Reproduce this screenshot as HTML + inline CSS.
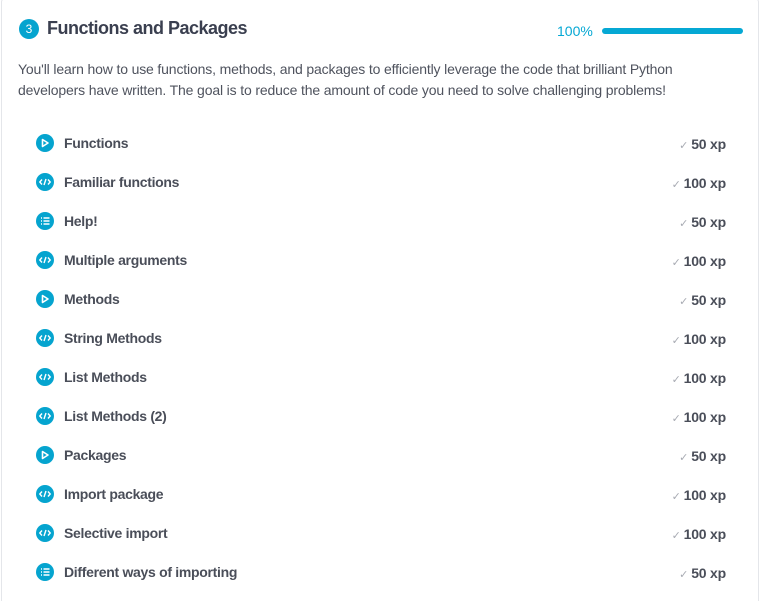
<!DOCTYPE html>
<html style="height:603px;overflow:hidden"><head><style>
body{margin:0;width:762px;height:603px;background:#fff;font-family:"Liberation Sans",sans-serif;overflow:hidden;position:relative}
.card{position:absolute;left:1px;top:-2px;width:758px;height:603px;border:1px solid #e4e6ea;border-bottom:none;border-radius:4px 4px 0 0;box-sizing:border-box}
.num{position:absolute;left:19px;top:19px;width:20px;height:20px;border-radius:50%;background:#05a4cf;color:#fff;font-size:12px;text-align:center;line-height:20px}
.title{position:absolute;left:47px;top:18px;font-size:18px;font-weight:bold;color:#3a3f4f;letter-spacing:-0.5px}
.pct{position:absolute;left:557px;top:23px;font-size:14px;color:#05a8d4}
.bar{position:absolute;left:602px;top:28px;width:141px;height:6px;border-radius:3px;background:#05a8d4}
.desc{position:absolute;left:18px;top:59px;font-size:14px;line-height:21px;color:#4f535e;width:690px;letter-spacing:-0.15px}
.row{position:absolute;left:36px;width:690px;height:20px}
.ic{position:absolute;left:0;top:0;width:18px;height:18px;border-radius:50%;background:#05a4cf}
.ic svg{position:absolute;left:0;top:0}
.nm{position:absolute;left:28px;top:1px;font-size:14px;font-weight:bold;color:#4a4e59;letter-spacing:-0.3px}
.xp{position:absolute;right:0;top:2px;font-size:14px;font-weight:bold;color:#4a4e59;letter-spacing:-0.2px}
.xp span{color:#a8abb3;font-weight:normal;font-size:11px;margin-right:3px}
</style></head><body>
<div class="card"></div>
<div class="num">3</div>
<div class="title">Functions and Packages</div>
<div class="pct">100%</div>
<div class="bar"></div>
<div class="desc">You'll learn how to use functions, methods, and packages to efficiently leverage the code that brilliant Python<br>developers have written. The goal is to reduce the amount of code you need to solve challenging problems!</div>
<div id="rows"></div>
<script>
var play='<svg width="18" height="18"><path d="M6.5 5.5 L12 9 L6.5 12.5 Z" fill="none" stroke="#fff" stroke-width="1.6" stroke-linejoin="round"/></svg>';
var code='<svg width="18" height="18"><path d="M6 6.5 L3.8 9 L6 11.5 M12 6.5 L14.2 9 L12 11.5 M10 6 L8 12" fill="none" stroke="#fff" stroke-width="1.4"/></svg>';
var list='<svg width="18" height="18"><path d="M5 6h1M5 9h1M5 12h1M7.5 6h6M7.5 9h6M7.5 12h6" stroke="#fff" stroke-width="1.4"/></svg>';
var d=[[play,"Functions",50],[code,"Familiar functions",100],[list,"Help!",50],[code,"Multiple arguments",100],[play,"Methods",50],[code,"String Methods",100],[code,"List Methods",100],[code,"List Methods (2)",100],[play,"Packages",50],[code,"Import package",100],[code,"Selective import",100],[list,"Different ways of importing",50]];
var h='';
d.forEach(function(r,i){var y=134+i*39;h+='<div class="row" style="top:'+y+'px"><div class="ic">'+r[0]+'</div><div class="nm">'+r[1]+'</div><div class="xp"><span>✓</span>'+r[2]+' xp</div></div>';});
document.getElementById('rows').innerHTML=h;
</script>
</body></html>
